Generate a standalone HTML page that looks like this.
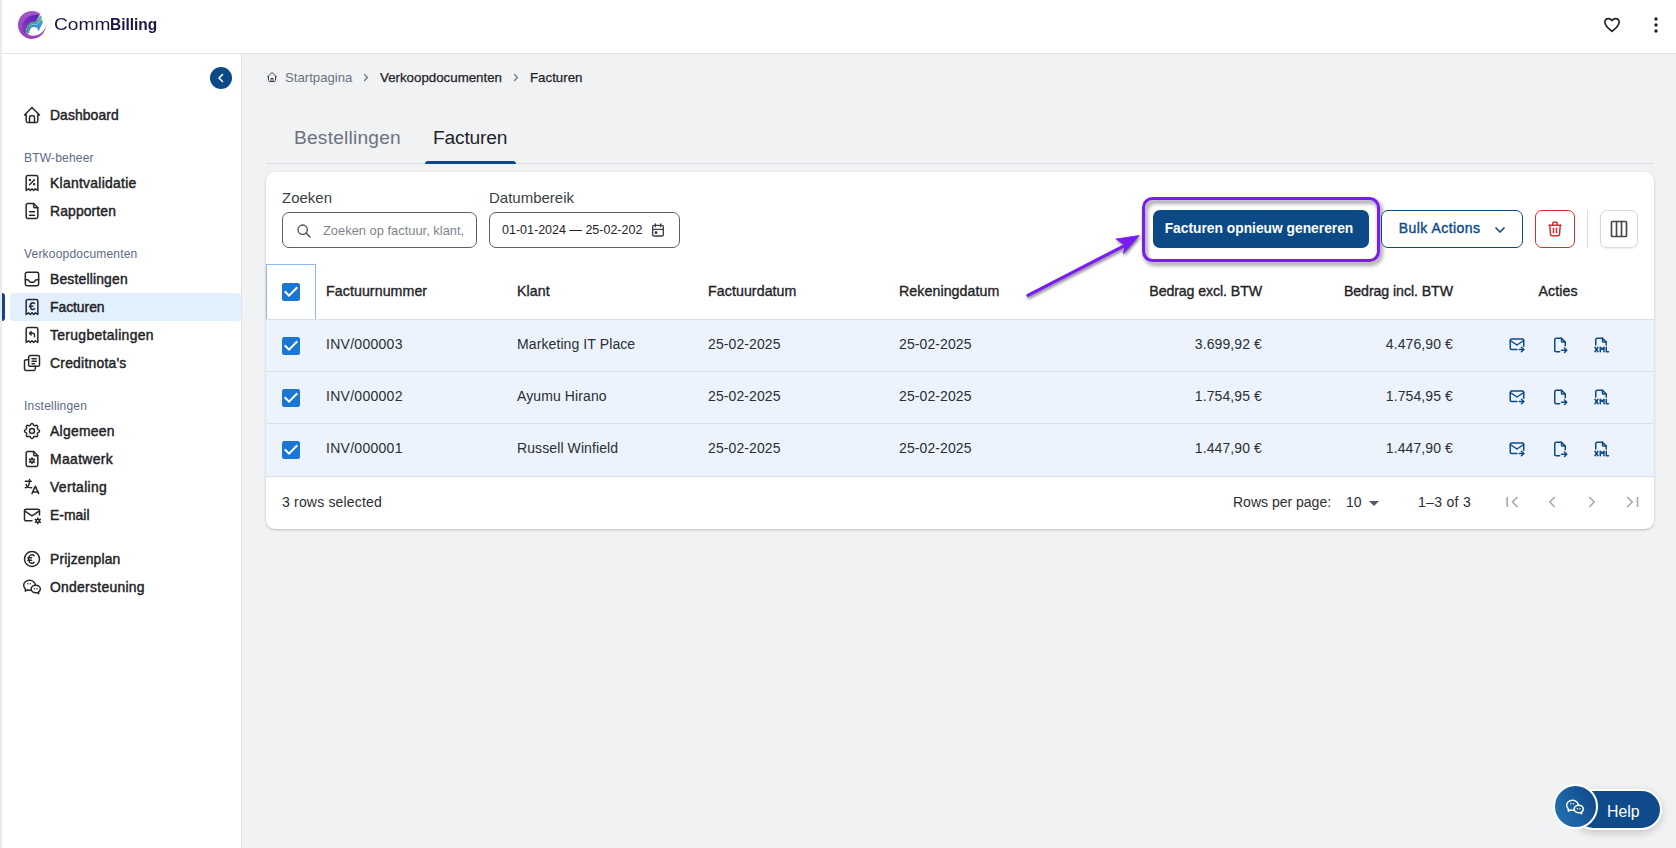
<!DOCTYPE html>
<html lang="nl">
<head>
<meta charset="utf-8">
<title>CommBilling - Facturen</title>
<style>
*{box-sizing:border-box;margin:0;padding:0}
html,body{width:1676px;height:848px;overflow:hidden;background:#f1f2f4;font-family:"Liberation Sans",sans-serif;color:#1f2328}
.abs{position:absolute}
#edge{left:0;top:0;width:2px;height:848px;background:#ebebeb}
#header{left:2px;top:0;width:1674px;height:54px;background:#fff;border-bottom:1px solid #e2e3e5}
#sidebar{left:2px;top:54px;width:240px;height:794px;background:#fff;border-right:1px solid #dfe1e6}
.logo-text{top:13px;line-height:22px;color:#1d1547;white-space:nowrap}
.logo-text b{font-weight:bold}
.nav{left:0;width:239px;height:28px}
.nav svg{position:absolute;left:20px;top:4px;width:20px;height:20px;stroke:#24292f;fill:none;stroke-width:1.800;stroke-linecap:round;stroke-linejoin:round}
.nav span{position:absolute;left:48px;top:0;line-height:28px;font-size:13.9px;-webkit-text-stroke:.45px #1f2328;color:#1f2328;white-space:nowrap}
.nav.active{background:#e2f0fd;left:8px;width:231px;border-radius:4px}
.nav.active svg{left:12px}
.nav.active span{left:40px}
.sec{left:22px;margin-top:1px;font-size:12px;letter-spacing:.2px;line-height:14px;color:#5a6a85;white-space:nowrap}
#main{left:243px;top:54px;width:1433px;height:794px}

.bc{top:15px;line-height:18px;font-size:13.200px;white-space:nowrap}
.bcd{color:#1f2328;font-size:13.300px;-webkit-text-stroke:.25px #1f2328}
.tab{top:70.500px;line-height:26px;font-size:19.200px;white-space:nowrap}
#card{left:23px;top:118px;width:1388px;height:357px;background:#fff;border-radius:9px;box-shadow:0 1px 3px rgba(0,0,0,.14),0 1px 2px rgba(0,0,0,.08)}
.lbl{top:17px;line-height:18px;font-size:15px;color:#3a3f47;white-space:nowrap}
.inp{top:40px;height:36px;border:1px solid #5c6168;border-radius:7px;background:#fff}
.btn-primary{background:#0c4a87;border-radius:7px;color:#fff;font-weight:bold;font-size:13.800px;line-height:37px;text-align:center;white-space:nowrap}
.btn-outline{border:1px solid #0c4a87;border-radius:7px;background:#fff;color:#0c4a87;-webkit-text-stroke:.4px #0c4a87;letter-spacing:.47px;font-size:14px;line-height:35px;white-space:nowrap}
.btn-outline span{position:absolute;left:16.700px;top:0}

.th{top:110px;line-height:18px;font-size:14.200px;letter-spacing:.08px;-webkit-text-stroke:.35px #1f2328;color:#1f2328;white-space:nowrap}
.r{text-align:right}.c{text-align:center}
.row{left:0;width:1388px;background:#edf3fc;border-bottom:1px solid #dcdfe4}
.td{top:15px;line-height:18px;font-size:14px;letter-spacing:.1px;color:#2a2e35;white-space:nowrap}
.ai{top:16px;width:18px;height:18px;fill:none;stroke:#0c4a87;stroke-width:2;stroke-linecap:round;stroke-linejoin:round}
.ft{top:321px;line-height:18px;font-size:14px;color:#2a2e35;white-space:nowrap}
</style>
</head>
<body>
<div id="edge" class="abs"></div>

<!-- HEADER -->
<div id="header" class="abs">
  <svg class="abs" style="left:14px;top:9px" width="32" height="32" viewBox="16 9 32 32">
    <defs>
      <linearGradient id="lg1" x1="0" y1="0" x2="0" y2="1"><stop offset="0" stop-color="#a457c6"/><stop offset="1" stop-color="#9a40bb"/></linearGradient>
      <linearGradient id="lg2" x1="1" y1="0" x2="0" y2="1"><stop offset="0" stop-color="#5a1fc4"/><stop offset="1" stop-color="#8c3fc0"/></linearGradient>
      <linearGradient id="lg3" x1="1" y1="0" x2="0" y2="1"><stop offset="0" stop-color="#6cb897"/><stop offset="1" stop-color="#3d8a74"/></linearGradient>
      <linearGradient id="lg4" x1="1" y1="0" x2="0" y2="1"><stop offset="0" stop-color="#3fa0e6"/><stop offset="1" stop-color="#2c80c4"/></linearGradient>
    </defs>
    <path d="M40.400 13.780A14 14 0 1 0 45.700 27.500C46.300 26.300 46.600 25 46.700 23.600C45.500 30 40.500 35.800 33.500 35.800C28.500 35.800 25.500 32.500 25.600 28.500C25.700 22 31 16.500 39.400 15.400Z" fill="url(#lg1)"/>
    <path d="M39.500 15.100C32 13.800 23.500 17.500 22 26C21.600 30 23.500 33.500 26.500 35C25.700 33.500 25.500 31 26.500 28C27.500 25 30 22.500 33 22.200L36 21.700Z" fill="url(#lg2)"/>
    <path d="M26.200 32.300C26 27.500 28 23.300 31.500 22.300L35.600 21.600L40.200 15.400L41.900 16.600L41.600 19.200L37.500 24.400L32.500 24.600C29.700 25.200 28.200 29 28.200 33.300Z" fill="url(#lg3)"/>
    <path d="M28.100 33.200C28 29 29.500 25.500 32.500 24.700L37.500 24.500L41.600 19.500L43 22.300L38.500 31.200L37 27.400L33 27C30.500 27.500 29.200 30.500 29.200 33.600Z" fill="url(#lg4)"/>
  </svg>
  <div class="abs logo-text" style="left:51.900px;font-size:16.500px;transform:scaleX(1.160);transform-origin:0 50%">Comm</div><div class="abs logo-text" style="left:108.200px;font-size:16.300px;font-weight:bold;transform:scaleX(.950);transform-origin:0 50%">Billing</div>
  <svg class="abs" style="left:1601px;top:16px" width="18" height="18" viewBox="0 0 24 24" fill="none" stroke="#1f2328" stroke-width="2.2" stroke-linejoin="round"><path d="M12 20.5C5 15 2.5 12 2.5 8.3C2.5 5.4 4.7 3.4 7.3 3.4C9.2 3.4 10.9 4.4 12 6.1C13.100 4.4 14.8 3.4 16.7 3.4C19.3 3.4 21.5 5.4 21.5 8.3C21.5 12 19 15 12 20.5Z"/></svg>
  <svg class="abs" style="left:1650px;top:15px" width="8" height="20" viewBox="0 0 8 20"><circle cx="4" cy="4" r="1.7" fill="#1f2328"/><circle cx="4" cy="10" r="1.7" fill="#1f2328"/><circle cx="4" cy="16" r="1.7" fill="#1f2328"/></svg>
</div>

<!-- SIDEBAR -->
<div id="sidebar" class="abs">
  <div class="abs" style="left:208px;top:13px;width:22px;height:22px;border-radius:50%;background:#0c4a87">
    <svg class="abs" style="left:6px;top:5px" width="10" height="12" viewBox="0 0 10 12" fill="none" stroke="#fff" stroke-width="1.6" stroke-linecap="round" stroke-linejoin="round"><path d="M6.5 2.5L3 6L6.500 9.500"/></svg>
  </div>
  <div class="abs" style="left:0;top:239px;width:3px;height:28px;background:#0c4a87;border-radius:0 3px 3px 0"></div>
  <div class="abs nav" style="top:47px"><svg viewBox="0 0 24 24"><path d="M5 12l-2 0l9 -9l9 9l-2 0"/><path d="M5 12v7a2 2 0 0 0 2 2h10a2 2 0 0 0 2 -2v-7"/><path d="M9 21v-6a2 2 0 0 1 2 -2h2a2 2 0 0 1 2 2v6"/></svg><span style="letter-spacing:0.092px">Dashboard</span></div>
  <div class="abs sec" style="top:96px">BTW-beheer</div>
  <div class="abs nav" style="top:115px"><svg viewBox="0 0 24 24"><path d="M9 14l6 -6"/><circle cx="9.5" cy="8.5" r=".6" fill="#24292f"/><circle cx="14.5" cy="13.5" r=".6" fill="#24292f"/><path d="M5 21v-16a2 2 0 0 1 2 -2h10a2 2 0 0 1 2 2v16l-3 -2l-2 2l-2 -2l-2 2l-2 -2l-3 2"/></svg><span style="letter-spacing:0.281px">Klantvalidatie</span></div>
  <div class="abs nav" style="top:143px"><svg viewBox="0 0 24 24"><path d="M14 3v4a1 1 0 0 0 1 1h4"/><path d="M17 21h-10a2 2 0 0 1 -2 -2v-14a2 2 0 0 1 2 -2h7l5 5v11a2 2 0 0 1 -2 2z"/><path d="M9 13l6 0"/><path d="M9 17l6 0"/></svg><span style="letter-spacing:0.133px">Rapporten</span></div>
  <div class="abs sec" style="top:192px">Verkoopdocumenten</div>
  <div class="abs nav" style="top:211px"><svg viewBox="0 0 24 24"><path d="M4 6a2 2 0 0 1 2 -2h12a2 2 0 0 1 2 2v12a2 2 0 0 1 -2 2h-12a2 2 0 0 1 -2 -2z"/><path d="M4 13h3l3 3h4l3 -3h3"/></svg><span style="letter-spacing:0.176px">Bestellingen</span></div>
  <div class="abs nav active" style="top:239px"><svg viewBox="0 0 24 24"><path d="M5 21v-16a2 2 0 0 1 2 -2h10a2 2 0 0 1 2 2v16l-3 -2l-2 2l-2 -2l-2 2l-2 -2l-3 2"/><path d="M15 7.800c-.523 -.502 -1.172 -.8 -1.875 -.8c-1.727 0 -3.125 1.791 -3.125 4s1.398 4 3.125 4c.703 0 1.352 -.298 1.874 -.8"/><path d="M9 11h4"/></svg><span style="letter-spacing:-0.035px">Facturen</span></div>
  <div class="abs nav" style="top:267px"><svg viewBox="0 0 24 24"><path d="M5 21v-16a2 2 0 0 1 2 -2h10a2 2 0 0 1 2 2v16l-3 -2l-2 2l-2 -2l-2 2l-2 -2l-3 2"/><path d="M15 14v-2a2 2 0 0 0 -2 -2h-4l2 -2m0 4l-2 -2"/></svg><span style="letter-spacing:0.329px">Terugbetalingen</span></div>
  <div class="abs nav" style="top:295px"><svg viewBox="0 0 24 24"><path d="M8 5a2 2 0 0 1 2 -2h9a2 2 0 0 1 2 2v9a2 2 0 0 1 -2 2h-9a2 2 0 0 1 -2 -2z"/><path d="M16 16v3a2 2 0 0 1 -2 2h-9a2 2 0 0 1 -2 -2v-9a2 2 0 0 1 2 -2h3"/><path d="M12 7h5"/><path d="M12 10h5"/><path d="M12 13h3"/></svg><span style="letter-spacing:0.239px">Creditnota's</span></div>
  <div class="abs sec" style="top:344px">Instellingen</div>
  <div class="abs nav" style="top:363px"><svg viewBox="0 0 24 24"><path d="M10.325 4.317c.426 -1.756 2.924 -1.756 3.350 0a1.724 1.724 0 0 0 2.573 1.066c1.543 -.94 3.310 .826 2.370 2.370a1.724 1.724 0 0 0 1.065 2.572c1.756 .426 1.756 2.924 0 3.350a1.724 1.724 0 0 0 -1.066 2.573c.94 1.543 -.826 3.310 -2.370 2.370a1.724 1.724 0 0 0 -2.572 1.065c-.426 1.756 -2.924 1.756 -3.350 0a1.724 1.724 0 0 0 -2.573 -1.066c-1.543 .94 -3.310 -.826 -2.370 -2.370a1.724 1.724 0 0 0 -1.065 -2.572c-1.756 -.426 -1.756 -2.924 0 -3.350a1.724 1.724 0 0 0 1.066 -2.573c-.94 -1.543 .826 -3.310 2.370 -2.370c1 .608 2.296 .070 2.572 -1.065z"/><path d="M9 12a3 3 0 1 0 6 0a3 3 0 0 0 -6 0"/></svg><span style="letter-spacing:0.273px">Algemeen</span></div>
  <div class="abs nav" style="top:391px"><svg viewBox="0 0 24 24"><path d="M12 14m-2 0a2 2 0 1 0 4 0a2 2 0 1 0 -4 0"/><path d="M12 10.500v1.500"/><path d="M12 16v1.500"/><path d="M15.031 12.250l-1.299 .75"/><path d="M10.268 15l-1.300 .75"/><path d="M15 15.803l-1.285 -.773"/><path d="M10.285 12.970l-1.285 -.773"/><path d="M14 3v4a1 1 0 0 0 1 1h4"/><path d="M17 21h-10a2 2 0 0 1 -2 -2v-14a2 2 0 0 1 2 -2h7l5 5v11a2 2 0 0 1 -2 2z"/></svg><span style="letter-spacing:0.372px">Maatwerk</span></div>
  <div class="abs nav" style="top:419px"><svg viewBox="0 0 24 24"><path d="M4 5h7"/><path d="M9 3v2c0 4.418 -2.239 8 -5 8"/><path d="M5 9c0 2.144 2.952 3.908 6.700 4"/><path d="M12 20l4 -9l4 9"/><path d="M19.100 18h-6.200"/></svg><span style="letter-spacing:0.348px">Vertaling</span></div>
  <div class="abs nav" style="top:447px"><svg viewBox="0 0 24 24"><path d="M12 19h-7a2 2 0 0 1 -2 -2v-10a2 2 0 0 1 2 -2h14a2 2 0 0 1 2 2v5"/><path d="M3 7l9 6l9 -6"/><path d="M19 19m-2 0a2 2 0 1 0 4 0a2 2 0 1 0 -4 0"/><path d="M19 15.500v1.500"/><path d="M19 21v1.500"/><path d="M22.032 17.250l-1.299 .75"/><path d="M17.270 20l-1.300 .75"/><path d="M15.970 17.250l1.300 .75"/><path d="M20.733 20l1.300 .75"/></svg><span style="letter-spacing:0.04px">E-mail</span></div>
  <div class="abs nav" style="top:491px"><svg viewBox="0 0 24 24"><path d="M12 12m-9 0a9 9 0 1 0 18 0a9 9 0 1 0 -18 0"/><path d="M14.401 8c-.669 -.628 -1.500 -1 -2.401 -1c-2.210 0 -4 2.239 -4 5s1.790 5 4 5c.900 0 1.731 -.372 2.400 -1"/><path d="M7 10.500h4.500"/><path d="M7 13.500h4.500"/></svg><span style="letter-spacing:0.16px">Prijzenplan</span></div>
  <div class="abs nav" style="top:519px"><svg viewBox="0 0 24 24"><path d="M16.500 10c3.038 0 5.500 2.015 5.500 4.500c0 1.397 -.778 2.645 -2 3.470l0 2.030l-1.964 -1.178a6.649 6.649 0 0 1 -1.536 .178c-3.038 0 -5.500 -2.015 -5.500 -4.500s2.462 -4.500 5.500 -4.500z"/><path d="M11.197 15.698c-.69 .196 -1.430 .302 -2.197 .302a8.008 8.008 0 0 1 -2.612 -.432l-2.388 1.432v-2.801c-1.237 -1.082 -2 -2.564 -2 -4.199c0 -3.314 3.134 -6 7 -6c3.782 0 6.863 2.570 7 5.785l0 .233"/><path d="M10 8h.01"/><path d="M7 8h.01"/><path d="M15 14h.01"/><path d="M18 14h.01"/></svg><span style="letter-spacing:0.286px">Ondersteuning</span></div>
</div>

<!-- MAIN -->
<div id="main" class="abs">

  <!-- breadcrumb (main origin = 243,54) -->
  <svg class="abs" style="left:23px;top:17px" width="12" height="12" viewBox="0 0 24 24" fill="none" stroke="#3a3f47" stroke-width="2" stroke-linecap="round" stroke-linejoin="round"><path d="M5 12l-2 0l9 -9l9 9l-2 0"/><path d="M5 12v7a2 2 0 0 0 2 2h10a2 2 0 0 0 2 -2v-7"/><path d="M10 21v-6h4v6"/></svg>
  <div class="abs bc" style="left:42px;color:#6b7280">Startpagina</div>
  <svg class="abs" style="left:119px;top:19px" width="8" height="9" viewBox="0 0 8 9" fill="none" stroke="#6b7280" stroke-width="1.2" stroke-linecap="round" stroke-linejoin="round"><path d="M2.500 1.500L5.500 4.500L2.500 7.500"/></svg>
  <div class="abs bc bcd" style="left:137px">Verkoopdocumenten</div>
  <svg class="abs" style="left:269px;top:19px" width="8" height="9" viewBox="0 0 8 9" fill="none" stroke="#6b7280" stroke-width="1.2" stroke-linecap="round" stroke-linejoin="round"><path d="M2.500 1.500L5.500 4.500L2.500 7.500"/></svg>
  <div class="abs bc bcd" style="left:287px">Facturen</div>

  <!-- tabs -->
  <div class="abs tab" style="left:51px;color:#6b7280;letter-spacing:.2px">Bestellingen</div>
  <div class="abs tab" style="left:190px;color:#1f2328;letter-spacing:-.2px">Facturen</div>
  <div class="abs" style="left:23px;top:109px;width:1388px;height:1px;background:#dcdee2"></div>
  <div class="abs" style="left:182px;top:107px;width:91px;height:3px;background:#0c4a87;border-radius:3px 3px 0 0"></div>

  <!-- card -->
  <div id="card" class="abs">
    <div class="abs lbl" style="left:16px">Zoeken</div>
    <div class="abs lbl" style="left:223px">Datumbereik</div>
    <div class="abs inp" style="left:16px;width:195px">
      <svg class="abs" style="left:13px;top:10px" width="16" height="16" viewBox="0 0 24 24" fill="none" stroke="#4a4f57" stroke-width="2" stroke-linecap="round" stroke-linejoin="round"><circle cx="10" cy="10" r="7"/><path d="M21 21l-6 -6"/></svg>
      <div class="abs" style="left:40px;top:0;line-height:35px;font-size:12.900px;color:#80858d;white-space:nowrap">Zoeken op factuur, klant,</div>
    </div>
    <div class="abs inp" style="left:223px;width:191px">
      <div class="abs" style="left:12px;top:0;line-height:35px;font-size:12.500px;color:#1f2328;white-space:nowrap">01-01-2024 &#8212; 25-02-202</div>
      <svg class="abs" style="left:160px;top:9px" width="16" height="16" viewBox="0 0 24 24" fill="none" stroke="#3a3f47" stroke-width="2" stroke-linecap="round" stroke-linejoin="round"><path d="M4 7a2 2 0 0 1 2 -2h12a2 2 0 0 1 2 2v12a2 2 0 0 1 -2 2h-12a2 2 0 0 1 -2 -2z"/><path d="M16 3v4"/><path d="M8 3v4"/><path d="M4 11h16"/><path d="M8 15h2v2h-2z"/></svg>
    </div>

    <!-- purple highlight -->
    <div class="abs" style="left:876px;top:25px;width:238px;height:65px;border:3px solid #7a1af5;border-radius:10.500px;filter:drop-shadow(2px 3px 2px rgba(10,5,30,.55))"></div>
    <div class="abs btn-primary" style="left:887px;top:38px;width:216px;height:38px;padding-right:4px">Facturen opnieuw genereren</div>
    <div class="abs btn-outline" style="left:1115px;top:38px;width:142px;height:38px"><span>Bulk Actions</span>
      <svg class="abs" style="left:110px;top:11px" width="16" height="16" viewBox="0 0 24 24" fill="none" stroke="#0c4a87" stroke-width="2.500" stroke-linecap="round" stroke-linejoin="round"><path d="M6 9l6 6l6 -6"/></svg>
    </div>
    <div class="abs" style="left:1269px;top:38px;width:40px;height:38px;border:1px solid #d32f2f;border-radius:7px;background:#fff">
      <svg class="abs" style="left:10px;top:9.300px" width="18" height="18" viewBox="0 0 24 24" fill="none" stroke="#d32f2f" stroke-width="2" stroke-linecap="round" stroke-linejoin="round"><path d="M4 7h16"/><path d="M10 11v6"/><path d="M14 11v6"/><path d="M5 7l1 12a2 2 0 0 0 2 2h8a2 2 0 0 0 2 -2l1 -12"/><path d="M9 7v-3a1 1 0 0 1 1 -1h4a1 1 0 0 1 1 1v3"/></svg>
    </div>
    <div class="abs" style="left:1321px;top:38px;width:1px;height:38px;background:#dcdee2"></div>
    <div class="abs" style="left:1334px;top:38px;width:38px;height:38px;border:1px solid #d9dadd;border-radius:7px;background:#fff;box-shadow:0 1px 2px rgba(0,0,0,.07)">
      <svg class="abs" style="left:8px;top:8px" width="20" height="20" viewBox="0 0 24 24" fill="none" stroke="#45484d" stroke-width="2" stroke-linecap="round" stroke-linejoin="round"><path d="M3 4a1 1 0 0 1 1 -1h16a1 1 0 0 1 1 1v16a1 1 0 0 1 -1 1h-16a1 1 0 0 1 -1 -1z"/><path d="M9 3v18"/><path d="M15 3v18"/></svg>
    </div>
    <div class="abs" style="left:0;top:92px;width:50px;height:56px;border:1px solid #8fb9ea;border-bottom:none"></div>
    <svg class="abs" style="left:16px;top:111px" width="18" height="18" viewBox="0 0 18 18"><rect x="0" y="0" width="18" height="18" rx="2.200" fill="#1976d2"/><path d="M7 14L2 9L3.410 7.590L7 11.170L14.590 3.580L16 5Z" fill="#fff"/></svg>
    <div class="abs th" style="left:60px">Factuurnummer</div>
    <div class="abs th" style="left:251px">Klant</div>
    <div class="abs th" style="left:442px">Factuurdatum</div>
    <div class="abs th" style="left:633px">Rekeningdatum</div>
    <div class="abs th r" style="left:796px;width:200px;letter-spacing:-.1px">Bedrag excl. BTW</div>
    <div class="abs th r" style="left:987px;width:200px;letter-spacing:-.08px">Bedrag incl. BTW</div>
    <div class="abs th c" style="left:1242px;width:100px">Acties</div>
    <div class="abs" style="left:0;top:147px;width:1388px;height:1px;background:#dcdfe4"></div>
    <div class="abs row" style="top:148px;height:52px">
      <svg class="abs" style="left:16px;top:17px" width="18" height="18" viewBox="0 0 18 18"><rect x="0" y="0" width="18" height="18" rx="2.200" fill="#1976d2"/><path d="M7 14L2 9L3.410 7.590L7 11.170L14.590 3.580L16 5Z" fill="#fff"/></svg>
      <div class="abs td" style="left:60px;letter-spacing:.28px">INV/000003</div>
      <div class="abs td" style="left:251px">Marketing IT Place</div>
      <div class="abs td" style="left:442px">25-02-2025</div>
      <div class="abs td" style="left:633px">25-02-2025</div>
      <div class="abs td r" style="left:796px;width:200px">3.699,92 €</div>
      <div class="abs td r" style="left:987px;width:200px">4.476,90 €</div>
      <svg class="abs ai" style="left:1242px" viewBox="0 0 24 24"><path d="M12 18h-7a2 2 0 0 1 -2 -2v-10a2 2 0 0 1 2 -2h14a2 2 0 0 1 2 2v7.500"/><path d="M3 6l9 6l9 -6"/><path d="M15 18h6"/><path d="M18 15l3 3l-3 3"/></svg>
      <svg class="abs ai" style="left:1285px" viewBox="0 0 24 24"><path d="M14 3v4a1 1 0 0 0 1 1h4"/><path d="M11.500 21h-4.500a2 2 0 0 1 -2 -2v-14a2 2 0 0 1 2 -2h7l5 5v5m-5 6h7m-3 -3l3 3l-3 3"/></svg>
      <svg class="abs ai" style="left:1326px" viewBox="0 0 24 24"><path d="M14 3v4a1 1 0 0 0 1 1h4"/><path d="M5 12v-7a2 2 0 0 1 2 -2h7l5 5v4"/><path d="M4 15l4 6"/><path d="M4 21l4 -6"/><path d="M19 15v6h3"/><path d="M11 21v-6l2.500 3l2.500 -3v6"/></svg>
    </div>
    <div class="abs row" style="top:200px;height:52px">
      <svg class="abs" style="left:16px;top:17px" width="18" height="18" viewBox="0 0 18 18"><rect x="0" y="0" width="18" height="18" rx="2.200" fill="#1976d2"/><path d="M7 14L2 9L3.410 7.590L7 11.170L14.590 3.580L16 5Z" fill="#fff"/></svg>
      <div class="abs td" style="left:60px;letter-spacing:.28px">INV/000002</div>
      <div class="abs td" style="left:251px">Ayumu Hirano</div>
      <div class="abs td" style="left:442px">25-02-2025</div>
      <div class="abs td" style="left:633px">25-02-2025</div>
      <div class="abs td r" style="left:796px;width:200px">1.754,95 €</div>
      <div class="abs td r" style="left:987px;width:200px">1.754,95 €</div>
      <svg class="abs ai" style="left:1242px" viewBox="0 0 24 24"><path d="M12 18h-7a2 2 0 0 1 -2 -2v-10a2 2 0 0 1 2 -2h14a2 2 0 0 1 2 2v7.500"/><path d="M3 6l9 6l9 -6"/><path d="M15 18h6"/><path d="M18 15l3 3l-3 3"/></svg>
      <svg class="abs ai" style="left:1285px" viewBox="0 0 24 24"><path d="M14 3v4a1 1 0 0 0 1 1h4"/><path d="M11.500 21h-4.500a2 2 0 0 1 -2 -2v-14a2 2 0 0 1 2 -2h7l5 5v5m-5 6h7m-3 -3l3 3l-3 3"/></svg>
      <svg class="abs ai" style="left:1326px" viewBox="0 0 24 24"><path d="M14 3v4a1 1 0 0 0 1 1h4"/><path d="M5 12v-7a2 2 0 0 1 2 -2h7l5 5v4"/><path d="M4 15l4 6"/><path d="M4 21l4 -6"/><path d="M19 15v6h3"/><path d="M11 21v-6l2.500 3l2.500 -3v6"/></svg>
    </div>
    <div class="abs row" style="top:252px;height:53px">
      <svg class="abs" style="left:16px;top:17px" width="18" height="18" viewBox="0 0 18 18"><rect x="0" y="0" width="18" height="18" rx="2.200" fill="#1976d2"/><path d="M7 14L2 9L3.410 7.590L7 11.170L14.590 3.580L16 5Z" fill="#fff"/></svg>
      <div class="abs td" style="left:60px;letter-spacing:.28px">INV/000001</div>
      <div class="abs td" style="left:251px">Russell Winfield</div>
      <div class="abs td" style="left:442px">25-02-2025</div>
      <div class="abs td" style="left:633px">25-02-2025</div>
      <div class="abs td r" style="left:796px;width:200px">1.447,90 €</div>
      <div class="abs td r" style="left:987px;width:200px">1.447,90 €</div>
      <svg class="abs ai" style="left:1242px" viewBox="0 0 24 24"><path d="M12 18h-7a2 2 0 0 1 -2 -2v-10a2 2 0 0 1 2 -2h14a2 2 0 0 1 2 2v7.500"/><path d="M3 6l9 6l9 -6"/><path d="M15 18h6"/><path d="M18 15l3 3l-3 3"/></svg>
      <svg class="abs ai" style="left:1285px" viewBox="0 0 24 24"><path d="M14 3v4a1 1 0 0 0 1 1h4"/><path d="M11.500 21h-4.500a2 2 0 0 1 -2 -2v-14a2 2 0 0 1 2 -2h7l5 5v5m-5 6h7m-3 -3l3 3l-3 3"/></svg>
      <svg class="abs ai" style="left:1326px" viewBox="0 0 24 24"><path d="M14 3v4a1 1 0 0 0 1 1h4"/><path d="M5 12v-7a2 2 0 0 1 2 -2h7l5 5v4"/><path d="M4 15l4 6"/><path d="M4 21l4 -6"/><path d="M19 15v6h3"/><path d="M11 21v-6l2.500 3l2.500 -3v6"/></svg>
    </div>
    <div class="abs ft" style="left:16px;letter-spacing:.18px">3 rows selected</div>
    <div class="abs ft" style="left:967px">Rows per page:</div>
    <div class="abs ft" style="left:1080px">10</div>
    <svg class="abs" style="left:1102px;top:328px" width="12" height="7" viewBox="0 0 12 7"><path d="M1 1h10l-5 5z" fill="#55595f"/></svg>
    <div class="abs ft" style="left:1152px;letter-spacing:.3px">1&#8211;3 of 3</div>
    <svg class="abs" style="left:1238px;top:322px" width="16" height="16" viewBox="0 0 16 16" fill="none" stroke="#a4a7ac" stroke-width="1.6" stroke-linecap="butt" stroke-linejoin="miter"><path d="M3.200 3v10"/><path d="M13.500 3L8.500 8L13.500 13"/></svg>
    <svg class="abs" style="left:1278px;top:322px" width="16" height="16" viewBox="0 0 16 16" fill="none" stroke="#a4a7ac" stroke-width="1.6" stroke-linecap="butt" stroke-linejoin="miter"><path d="M10.800 3L5.800 8L10.800 13"/></svg>
    <svg class="abs" style="left:1318px;top:322px" width="16" height="16" viewBox="0 0 16 16" fill="none" stroke="#a4a7ac" stroke-width="1.6" stroke-linecap="butt" stroke-linejoin="miter"><path d="M5.200 3L10.200 8L5.200 13"/></svg>
    <svg class="abs" style="left:1358px;top:322px" width="16" height="16" viewBox="0 0 16 16" fill="none" stroke="#a4a7ac" stroke-width="1.6" stroke-linecap="butt" stroke-linejoin="miter"><path d="M13.500 3v10"/><path d="M3.200 3L8.200 8L3.200 13"/></svg>
  </div>

</div>


<!-- purple arrow -->
<svg class="abs" style="left:1010px;top:220px;filter:drop-shadow(1.500px 2.500px 1.500px rgba(20,10,40,.55))" width="150" height="90" viewBox="1010 220 150 90">
  <path d="M1027.900 295.300L1125 245.300" fill="none" stroke="#7a1af5" stroke-width="3.100" stroke-linecap="round"/>
  <path d="M1139.200 235.500L1115.900 239.100L1125.300 245.200L1123.300 253.800Z" fill="#7a1af5" stroke="#7a1af5" stroke-width=".8" stroke-linejoin="round"/>
</svg>

<!-- help widget -->
<div class="abs" style="left:1573px;top:789px;width:89px;height:41px;border-radius:21px;background:#0f4a8a;border:2px solid #fff;box-shadow:0 3px 8px rgba(0,0,0,.18)"></div>
<div class="abs" style="left:1607px;top:800.500px;font-size:15.800px;line-height:22px;color:#fff;white-space:nowrap">Help</div>
<div class="abs" style="left:1553px;top:784px;width:45px;height:45px;border-radius:50%;border:2px solid #fff;background:linear-gradient(65deg,#2476b6 0%,#124b8d 85%)">
  <svg class="abs" style="left:10px;top:11px" width="20" height="20" viewBox="0 0 24 24" fill="none" stroke="#fff" stroke-width="1.8" stroke-linecap="round" stroke-linejoin="round"><path d="M16.500 10c3.038 0 5.500 2.015 5.500 4.500c0 1.397 -.778 2.645 -2 3.470l0 2.030l-1.964 -1.178a6.649 6.649 0 0 1 -1.536 .178c-3.038 0 -5.500 -2.015 -5.500 -4.500s2.462 -4.500 5.500 -4.500z"/><path d="M11.197 15.698c-.69 .196 -1.430 .302 -2.197 .302a8.008 8.008 0 0 1 -2.612 -.432l-2.388 1.432v-2.801c-1.237 -1.082 -2 -2.564 -2 -4.199c0 -3.314 3.134 -6 7 -6c3.782 0 6.863 2.570 7 5.785l0 .233"/><path d="M10 8h.01"/><path d="M7 8h.01"/><path d="M15 14h.01"/><path d="M18 14h.01"/></svg>
</div>

</body>
</html>
